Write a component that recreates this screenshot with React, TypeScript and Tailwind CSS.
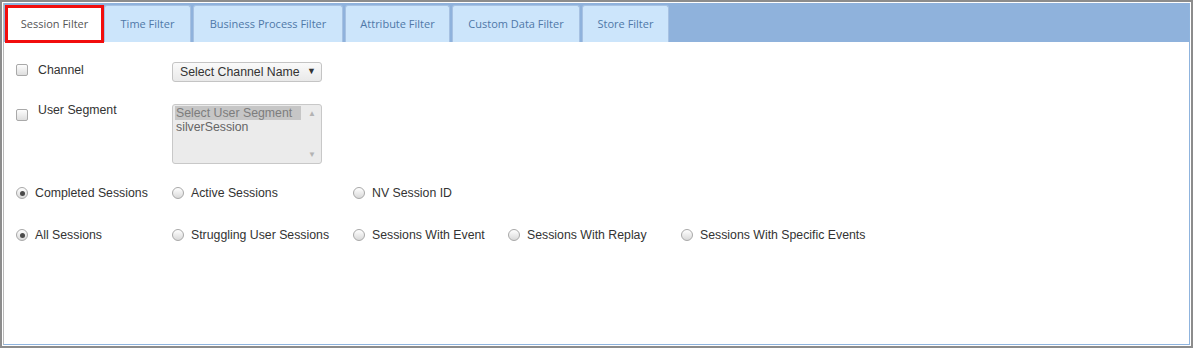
import React from 'react';

const tabs = [
  { label: 'Time Filter', w: 'w-[87px]' },
  { label: 'Business Process Filter', w: 'w-[150px] ml-[2px]' },
  { label: 'Attribute Filter', w: 'w-[105px] ml-[2px]' },
  { label: 'Custom Data Filter', w: 'w-[128px] ml-[2px]' },
  { label: 'Store Filter', w: 'w-[87px] ml-[2px]' },
];

function Checkbox() {
  return (
    <span className="block w-[12px] h-[12px] shrink-0 rounded-[2px] border border-[#a9a9a9] bg-gradient-to-b from-[#fdfdfd] to-[#dedede]" />
  );
}

function Radio({ checked = false }: { checked?: boolean }) {
  return (
    <span className="flex w-[12px] h-[12px] shrink-0 items-center justify-center rounded-full border border-[#a8a8a8] bg-gradient-to-b from-[#ffffff] to-[#d9d9d9]">
      {checked && <span className="block w-[5px] h-[5px] rounded-full bg-[#4a4a4a]" />}
    </span>
  );
}

function RadioItem({ label, width, checked }: { label: string; width: string; checked?: boolean }) {
  return (
    <div className={`${width} flex items-center gap-[7px] h-[16px]`}>
      <Radio checked={checked} />
      <span className="leading-[14px] whitespace-nowrap">{label}</span>
    </div>
  );
}

export default function App() {
  return (
    <div className="w-[1193px] h-[348px] border-2 border-[#8c8c8c] bg-white p-px font-['Liberation_Sans',Arial,sans-serif]">
      <div className="h-full flex flex-col border-l border-r border-b border-l-[#b9b9b9] border-r-[#8fb4de] border-b-[#8fb4de]">
        {/* tab bar */}
        <div className="h-[39px] bg-[#8fb2dc] flex items-end pl-px font-['Open_Sans',sans-serif] text-[11px]">
          <div className="w-[99px] h-[38px] -mb-px border-[3px] border-[#f20d0d] bg-white flex items-center justify-center text-[#555]">
            Session Filter
          </div>
          {tabs.map(t => (
            <div
              key={t.label}
              className={`${t.w} h-[37px] rounded-t-[3px] border-x border-t border-[#a6c1e2] bg-[#cce5fb] flex items-center justify-center text-[#4f78a8] whitespace-nowrap`}
            >
              {t.label}
            </div>
          ))}
        </div>

        {/* filter body */}
        <div className="flex-1 pl-3 pt-5 text-[12.3px] text-[#333]">
          <div className="flex items-start h-[20px]">
            <div className="w-[156px] h-[16px] flex items-center gap-[10px]">
              <Checkbox />
              <span className="leading-[14px]">Channel</span>
            </div>
            <div className="w-[150px] h-[20px] flex items-center justify-between rounded-[3px] border border-[#c4c4c4] bg-gradient-to-b from-[#fafafa] to-[#e9e9e9] pl-[7px] pr-[5px]">
              <span>Select Channel Name</span>
              <span className="text-[9px] text-[#333]">▼</span>
            </div>
          </div>

          <div className="flex items-start mt-[22px]">
            <div className="w-[156px] flex items-start gap-[10px]">
              <span className="mt-[5px]">
                <Checkbox />
              </span>
              <span className="leading-[14px] -mt-px">User Segment</span>
            </div>
            <div className="w-[150px] h-[60px] flex rounded-[3px] border border-[#c8c8c8] bg-[#ebebeb]">
              <div className="flex-1 pt-[1px] pl-[2px] leading-[14px]">
                <div className="w-[126px] bg-[#c6c6c6] text-[#7d7d7d] pl-px">Select User Segment</div>
                <div className="text-[#666] pl-px">silverSession</div>
              </div>
              <div className="w-[18px] flex flex-col items-center justify-between pt-[3px] pb-[2px] text-[8px] text-[#b3b3b3]">
                <span>▲</span>
                <span>▼</span>
              </div>
            </div>
          </div>

          <div className="flex mt-[21px]">
            <RadioItem width="w-[156px]" label="Completed Sessions" checked />
            <RadioItem width="w-[181px]" label="Active Sessions" />
            <RadioItem width="w-[155px]" label="NV Session ID" />
          </div>

          <div className="flex mt-[26px]">
            <RadioItem width="w-[156px]" label="All Sessions" checked />
            <RadioItem width="w-[181px]" label="Struggling User Sessions" />
            <RadioItem width="w-[155px]" label="Sessions With Event" />
            <RadioItem width="w-[173px]" label="Sessions With Replay" />
            <RadioItem width="w-[200px]" label="Sessions With Specific Events" />
          </div>
        </div>
      </div>
    </div>
  );
}
